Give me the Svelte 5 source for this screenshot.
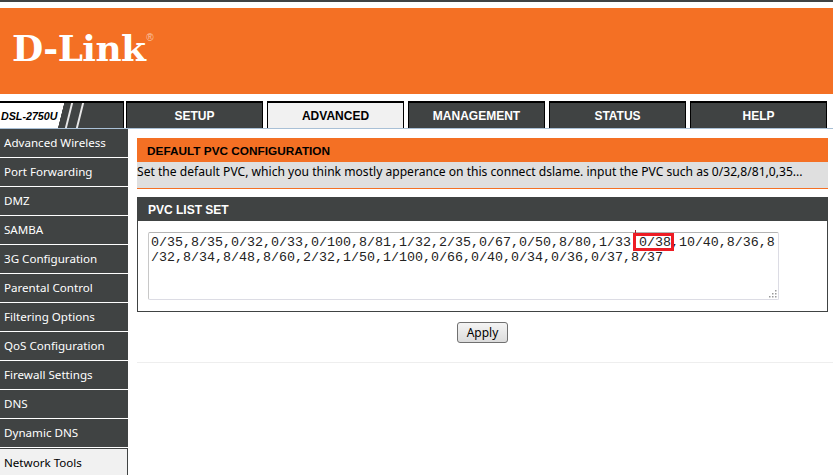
<script>
  const tabs = ['SETUP', 'ADVANCED', 'MANAGEMENT', 'STATUS', 'HELP'];
  const activeTab = 'ADVANCED';
  const menu = [
    'Advanced Wireless', 'Port Forwarding', 'DMZ', 'SAMBA', '3G Configuration',
    'Parental Control', 'Filtering Options', 'QoS Configuration',
    'Firewall Settings', 'DNS', 'Dynamic DNS', 'Network Tools'
  ];
  const activeItem = 'Network Tools';
  const pvcList = '0/35,8/35,0/32,0/33,0/100,8/81,1/32,2/35,0/67,0/50,8/80,1/33 0/38,10/40,8/36,8/32,8/34,8/48,8/60,2/32,1/50,1/100,0/66,0/40,0/34,0/36,0/37,8/37';
  // resize grip dots, bottom-right triangle
  const grip = [[7, 1], [4, 4], [7, 4], [1, 7], [4, 7], [7, 7]];
</script>

<div class="page">
  <div class="topline"></div>
  <header class="banner">
    <span class="logo">D-Link<sup>®</sup></span>
  </header>

  <nav class="tabs">
    <div class="model">
      <span class="model__name">DSL-2750U</span>
      <span class="model__slash"></span>
      <span class="model__slash model__slash--far"></span>
    </div>
    {#each tabs as tab}
      <div class="tab" class:tab--active={tab === activeTab}>{tab}</div>
    {/each}
  </nav>

  <div class="body">
    <aside class="side">
      {#each menu as item}
        <div class="side__item" class:side__item--active={item === activeItem}>{item}</div>
      {/each}
    </aside>

    <main class="main">
      <section class="intro">
        <h1>DEFAULT PVC CONFIGURATION</h1>
        <p>Set the default PVC, which you think mostly apperance on this connect dslame. input the PVC such as 0/32,8/81,0,35...</p>
      </section>

      <section class="box">
        <h2>PVC LIST SET</h2>
        <div class="box__body">
          <textarea readonly value={pvcList}></textarea>
          <span class="mark"></span>
          <span class="tick"></span>
          <svg class="grip" width="9" height="9" viewBox="0 0 9 9">
            {#each grip as [x, y]}
              <rect {x} {y} width="1.5" height="1.5" fill="#9a9a9a" />
            {/each}
          </svg>
        </div>
      </section>

      <div class="actions">
        <button type="button">Apply</button>
      </div>
    </main>
  </div>
</div>

<style>
  :global(body) {
    margin: 0;
    background: #fff;
    overflow: hidden;
  }

  .page {
    width: 833px;
    height: 475px;
    overflow: hidden;
    font-family: "Noto Sans", sans-serif;
  }

  .topline {
    height: 2px;
    background: #404343;
    margin-bottom: 6px;
  }

  .banner {
    height: 86px;
    background: #f47024;
    display: flex;
    align-items: center;
    padding-left: 12px;
  }

  .logo {
    font-family: "DejaVu Serif", serif;
    font-weight: bold;
    font-size: 36px;
    color: #fff;
    line-height: 1;
    letter-spacing: -0.6px;
    margin-top: -7px;
  }
  .logo sup {
    font-family: "Liberation Sans", sans-serif;
    font-weight: normal;
    font-size: 10px;
    color: #f9c6a4;
    vertical-align: 20px;
    line-height: 0;
    margin-left: 1px;
  }

  .tabs {
    display: flex;
    margin-top: 7px;
    height: 27px;
    border-bottom: 1px solid #a9c0d6;
  }

  .model {
    width: 124px;
    margin-right: 2px;
    box-sizing: border-box;
    border-top: 2px solid #000;
    border-right: 1px solid #000;
    background: linear-gradient(104deg, #fff 0 62px, #404343 62.5px);
    display: flex;
    align-items: center;
  }
  .model__name {
    font-family: "Liberation Sans", sans-serif;
    font-weight: bold;
    font-style: italic;
    font-size: 10.7px;
    color: #000;
    padding-left: 1px;
    width: 64px;
    white-space: nowrap;
  }
  .model__slash {
    width: 2px;
    height: 25px;
    margin-left: 3px;
    background: #e8e8e8;
    transform: skewX(-14deg);
  }
  .model__slash--far {
    margin-left: 9px;
  }

  .tab {
    width: 137px;
    margin-right: 4px;
    box-sizing: border-box;
    background: #404343;
    border: 1px solid #000;
    border-top-width: 2px;
    border-bottom: 0;
    color: #fff;
    font-family: "Liberation Sans", sans-serif;
    font-weight: bold;
    font-size: 12px;
    text-align: center;
    line-height: 25px;
    padding-top: 1px;
  }
  .tab--active {
    background: #f1f1f1;
    color: #000;
  }

  .body {
    display: flex;
  }

  .side {
    width: 128px;
    flex: none;
  }
  .side__item {
    height: 28px;
    margin-bottom: 1px;
    box-sizing: border-box;
    background: #404343;
    color: #fff;
    font-size: 11.6px;
    line-height: 28px;
    padding-left: 4px;
    white-space: nowrap;
  }
  .side__item--active {
    background: #f1f1f1;
    color: #000;
    border: 1px solid #404343;
    border-bottom: 0;
    border-left: 0;
    height: 29px;
  }

  .main {
    flex: 1;
    margin-left: 9px;
    padding-top: 9px;
    height: 224px;
    border-bottom: 1px solid #eee;
  }

  .intro {
    width: 691px;
    background: #dfdfdf;
    border-bottom: 1px solid #f47024;
    height: 50px;
  }
  .intro h1 {
    margin: 0;
    height: 24px;
    background: #f47024;
    color: #000;
    font-family: "Liberation Sans", sans-serif;
    font-weight: bold;
    font-size: 11.8px;
    line-height: 26px;
    padding-left: 10px;
  }
  .intro p {
    margin: 0;
    font-size: 12.1px;
    line-height: 19px;
    color: #000;
    white-space: nowrap;
  }

  .box {
    margin-top: 8px;
    width: 691px;
    box-sizing: border-box;
    border: 1px solid #404343;
    height: 115px;
  }
  .box h2 {
    margin: 0;
    height: 23px;
    background: #404343;
    color: #fff;
    font-family: "Liberation Sans", sans-serif;
    font-weight: bold;
    font-size: 12px;
    line-height: 25px;
    padding-left: 10px;
  }
  .box__body {
    position: relative;
    padding: 11px 0 0 10px;
  }

  textarea {
    display: block;
    width: 631px;
    height: 68px;
    box-sizing: border-box;
    margin: 0;
    padding: 2px 0 2px 2px;
    border: 1px solid #dcdce4;
    border-top-color: #b4b4b4;
    border-left-color: #c8c8c8;
    border-radius: 2px;
    font-family: "Liberation Mono", monospace;
    font-size: 13.33px;
    line-height: 15px;
    color: #222;
    outline: none;
    resize: none;
    overflow: hidden;
    line-break: anywhere;
  }

  .mark {
    position: absolute;
    left: 495px;
    top: 12px;
    width: 41px;
    height: 18px;
    box-sizing: border-box;
    border: 3px solid #ed1c24;
  }
  .tick {
    position: absolute;
    left: 497px;
    top: 9px;
    width: 1px;
    height: 3px;
    background: #a02030;
  }
  .grip {
    position: absolute;
    left: 630px;
    top: 68px;
  }

  .actions {
    display: flex;
    justify-content: center;
    padding-top: 10px;
    padding-right: 5px;
  }
  button {
    width: 51px;
    height: 21px;
    padding: 0;
    font-family: "Noto Sans", sans-serif;
    font-size: 12px;
    color: #000;
    background: linear-gradient(#f4f4f4, #dcdcdc);
    border: 1px solid #707070;
    border-radius: 3px;
  }
</style>
